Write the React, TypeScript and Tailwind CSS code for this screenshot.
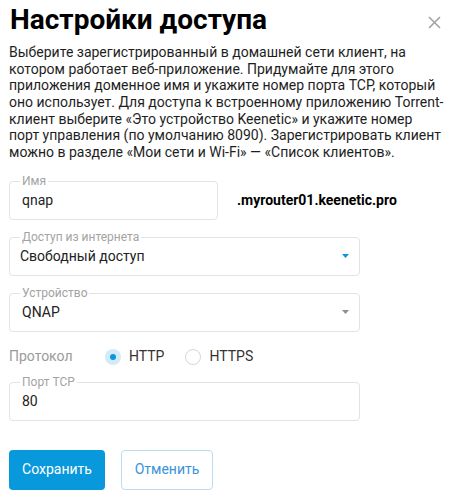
import { useState } from 'react';

function Field({
  label,
  children,
  className = '',
}: {
  label: string;
  children: React.ReactNode;
  className?: string;
}) {
  return (
    <div
      className={`relative h-[39px] rounded-[4px] border border-[#e3e3e3] flex items-center pl-[12px] pr-[10px] ${className}`}
    >
      <span className="absolute left-[10px] -top-[9px] bg-white px-[2px] text-[12px] leading-[16px] text-[#a3a3a3]">
        {label}
      </span>
      {children}
    </div>
  );
}

function Arrow({ color }: { color: string }) {
  return (
    <svg width="7" height="4" viewBox="0 0 7 4" className="shrink-0">
      <path d="M0 0h7L3.5 4z" fill={color} />
    </svg>
  );
}

function Radio({ checked, label, onClick }: { checked: boolean; label: string; onClick: () => void }) {
  return (
    <button type="button" onClick={onClick} className="flex items-center gap-[8px]">
      <span
        className={`w-[16px] h-[16px] rounded-full flex items-center justify-center ${
          checked ? 'bg-[#d3eaf8]' : 'border border-[#d6d6d6] bg-white'
        }`}
      >
        {checked && <span className="w-[6px] h-[6px] rounded-full bg-[#0a96dc]" />}
      </span>
      <span className="text-[14px] text-[#333]">{label}</span>
    </button>
  );
}

export default function App() {
  const [proto, setProto] = useState<'http' | 'https'>('http');

  return (
    <div
      className="w-[454px] h-[497px] bg-white px-[9px] text-[#1a1a1a]"
      style={{ fontFamily: 'Roboto, "Noto Sans", sans-serif' }}
    >
      {/* заголовок */}
      <div className="flex items-start justify-between pt-[3px]">
        <h1 className="text-[28px] leading-[34px] font-bold text-black pl-[1px]">Настройки доступа</h1>
        <button className="mt-[13px] mr-[4px] text-[#a0a4a8]">
          <svg width="13" height="13" viewBox="0 0 13 13">
            <path d="M1 1l11 11M12 1L1 12" stroke="currentColor" strokeWidth="1.6" />
          </svg>
        </button>
      </div>

      <p className="mt-[7px] text-[14px] leading-[16.67px] text-[#1e1e1e]">
        Выберите зарегистрированный в домашней сети клиент, на котором работает веб-приложение.
        Придумайте для этого приложения доменное имя и укажите номер порта TCP, который оно
        использует. Для доступа к встроенному приложению Torrent-клиент выберите «Это устройство
        Keenetic» и укажите номер порт управления (по умолчанию 8090). Зарегистрировать клиент можно
        в разделе «Мои сети и Wi-Fi» — «Список клиентов».
      </p>

      {/* имя */}
      <div className="mt-[20px] flex items-center">
        <Field label="Имя" className="w-[209px]">
          <span className="text-[14px] text-[#222]">qnap</span>
        </Field>
        <span className="ml-[19px] text-[14px] font-bold text-black">.myrouter01.keenetic.pro</span>
      </div>

      <Field label="Доступ из интернета" className="w-[351px] mt-[17px] justify-between">
        <span className="text-[14px] text-[#222] -ml-[2px]">Свободный доступ</span>
        <Arrow color="#0a96dc" />
      </Field>

      <Field label="Устройство" className="w-[351px] mt-[17px] justify-between">
        <span className="text-[14px] text-[#222]">QNAP</span>
        <Arrow color="#8e8e8e" />
      </Field>

      {/* протокол */}
      <div className="mt-[17px] flex items-center h-[16px]">
        <span className="w-[96px] text-[14px] text-[#9a9a9a]">Протокол</span>
        <div className="flex items-center gap-[21px]">
          <Radio checked={proto === 'http'} label="HTTP" onClick={() => setProto('http')} />
          <Radio checked={proto === 'https'} label="HTTPS" onClick={() => setProto('https')} />
        </div>
      </div>

      <Field label="Порт TCP" className="w-[351px] mt-[17px]">
        <span className="text-[14px] text-[#222]">80</span>
      </Field>

      {/* кнопки */}
      <div className="mt-[29px] flex items-center gap-[16px]">
        <button className="h-[40px] w-[96px] rounded-[4px] bg-[#0898dc] text-white text-[14px]">
          Сохранить
        </button>
        <button className="h-[40px] w-[92px] rounded-[4px] border border-[#b8dcf2] text-[#3a93da] text-[14px]">
          Отменить
        </button>
      </div>
    </div>
  );
}
